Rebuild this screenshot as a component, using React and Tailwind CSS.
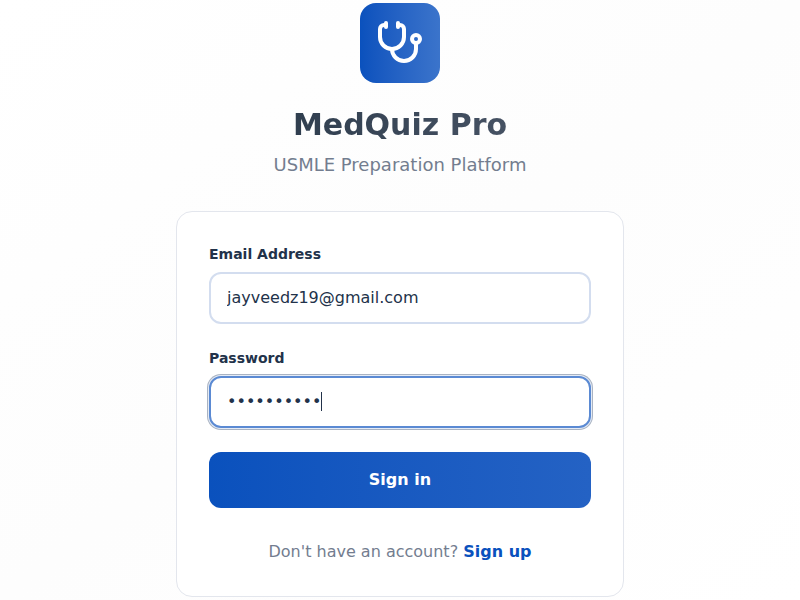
import { useEffect, useRef, useState } from "react";
import { Stethoscope } from "lucide-react";

const fieldClass =
  "block h-[52px] w-full rounded-xl border-2 bg-white px-4 pb-0.5 text-base text-[#22324a] outline-none";

// Advance of one masked character, in em.
const BULLET_ADVANCE = 0.59;

function Field({ id, label, inputRef, className, children, ...props }) {
  return (
    <div>
      <label htmlFor={id} className="mb-2 block text-sm font-semibold text-[#22324a]">
        {label}
      </label>
      <div className="relative">
        <input id={id} ref={inputRef} className={className} {...props} />
        {children}
      </div>
    </div>
  );
}

export default function App() {
  const [email, setEmail] = useState("jayveedz19@gmail.com");
  const [password, setPassword] = useState("medquiz123");
  const passwordRef = useRef(null);

  useEffect(() => {
    const input = passwordRef.current;
    input.focus();
    input.setSelectionRange(input.value.length, input.value.length);
  }, []);

  return (
    <main className="flex min-h-screen items-center justify-center bg-linear-to-br from-white via-[#fdfdfd] to-white font-['DejaVu_Sans',sans-serif]">
      <div className="w-full max-w-md">
        <header className="mb-8 text-center">
          <div className="mx-auto mb-6 flex size-20 items-center justify-center rounded-2xl bg-linear-to-r from-[#0a51bd] to-[#3b74cb] text-white">
            <Stethoscope className="size-12" aria-hidden="true" />
          </div>
          <h1 className="mb-2 bg-linear-to-r from-[#243444] to-[#525c6e] bg-clip-text text-3xl font-bold text-transparent">
            MedQuiz Pro
          </h1>
          <p className="text-lg/7 text-[#737d8f]">USMLE Preparation Platform</p>
        </header>

        <section className="rounded-2xl border border-[#e3e6ed] bg-white p-8">
          <form className="flex flex-col gap-6" onSubmit={(e) => e.preventDefault()}>
            <Field
              id="email"
              label="Email Address"
              type="email"
              value={email}
              onChange={(e) => setEmail(e.target.value)}
              className={`${fieldClass} border-[#d3ddef]`}
            />
            <Field
              id="password"
              label="Password"
              type="password"
              inputRef={passwordRef}
              value={password}
              onChange={(e) => setPassword(e.target.value)}
              className={`${fieldClass} border-[#5b8ad3] caret-transparent shadow-[0_0_0_1px_#e4ebf6,0_0_0_2px_#a9b3c2]`}
            >
              <span
                aria-hidden="true"
                className="pointer-events-none absolute top-4 h-[19px] w-px bg-[#22324a]"
                style={{ left: `calc(18px + ${password.length * BULLET_ADVANCE}em)` }}
              />
            </Field>
            <button
              type="submit"
              className="h-14 w-full rounded-xl bg-linear-to-r from-[#0a51bd] to-[#2462c4] text-base font-semibold text-white"
            >
              Sign in
            </button>
          </form>
          <p className="mt-8 text-center text-base text-[#737d8f]">
            Don't have an account?{" "}
            <a href="#signup" className="font-semibold text-[#0a51bd]">
              Sign up
            </a>
          </p>
        </section>
      </div>
    </main>
  );
}
